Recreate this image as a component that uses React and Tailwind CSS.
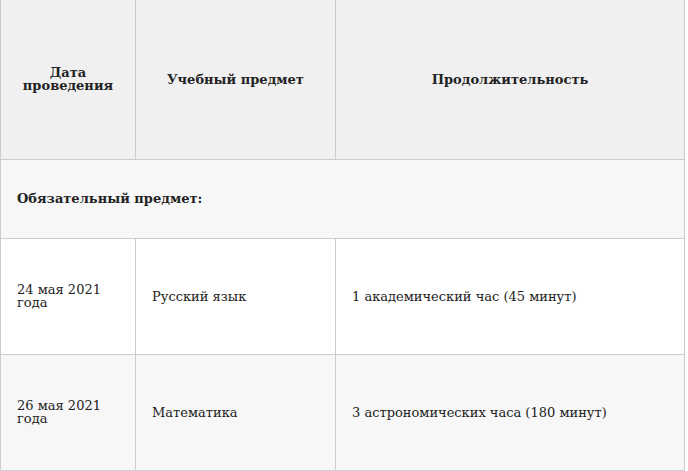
import React from 'react';

const rows = [
  { date: '24 мая 2021 года', subject: 'Русский язык', time: '1 академический час (45 минут)', bg: 'bg-white' },
  { date: '26 мая 2021 года', subject: 'Математика', time: '3 астрономических часа (180 минут)', bg: 'bg-[#f7f7f7]' },
];

export default function App() {
  return (
    <div className="w-[688px] h-[471px] overflow-hidden bg-white text-[#222] text-[13px] leading-[13px] [font-family:'DejaVu_Serif',serif]">
      <table className="w-[685px] border-collapse table-fixed">
        <colgroup>
          <col className="w-[135px]" />
          <col className="w-[200px]" />
          <col />
        </colgroup>
        <thead>
          <tr className="bg-[#f0f0f0] h-[159px]">
            <th className="border border-t-0 border-[#cccccc] px-4 font-bold text-center align-middle">Дата проведения</th>
            <th className="border border-t-0 border-[#cccccc] px-4 font-bold text-center align-middle">Учебный предмет</th>
            <th className="border border-t-0 border-[#cccccc] px-4 font-bold text-center align-middle">Продолжительность</th>
          </tr>
        </thead>
        <tbody>
          <tr className="bg-[#f7f7f7] h-[79px]">
            <td colSpan={3} className="border border-[#cccccc] px-4 font-bold align-middle">Обязательный предмет:</td>
          </tr>
          {rows.map((r) => (
            <tr key={r.date} className={`${r.bg} h-[116px]`}>
              <td className="border border-[#cccccc] px-4 align-middle">{r.date}</td>
              <td className="border border-[#cccccc] px-4 align-middle">{r.subject}</td>
              <td className="border border-[#cccccc] px-4 align-middle">{r.time}</td>
            </tr>
          ))}
        </tbody>
      </table>
    </div>
  );
}
